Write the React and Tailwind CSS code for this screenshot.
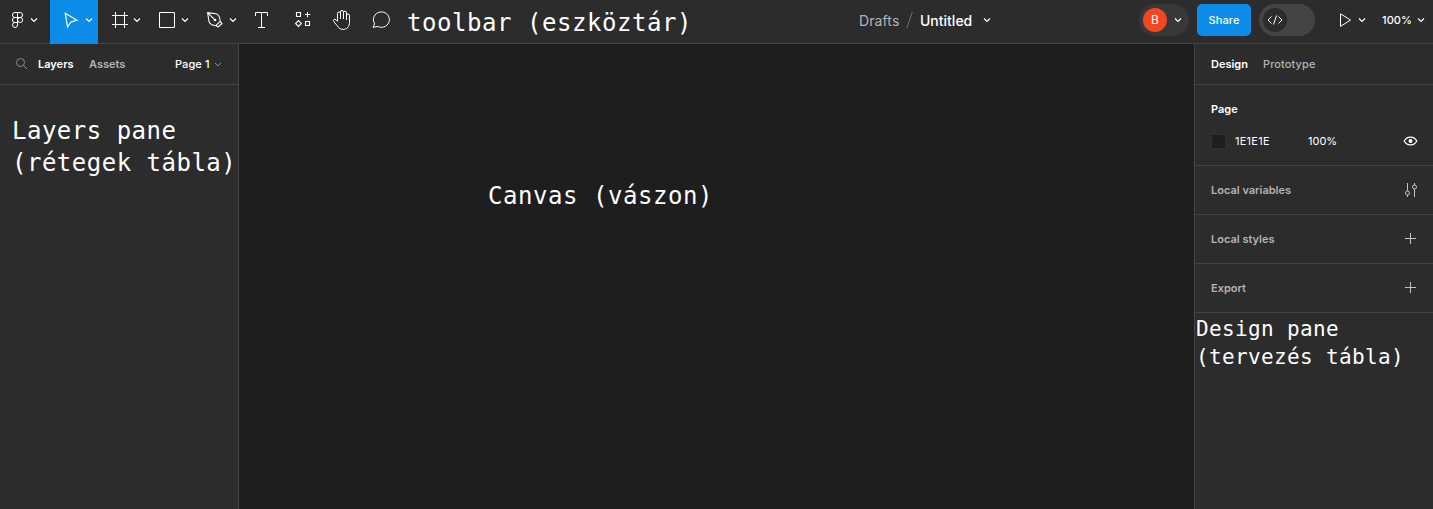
import React from "react";

const Tool = ({ x, w, active, children }) => (
  <button
    className={active ? "h-11 shrink-0 bg-[#0c8ce9] text-white" : "h-11 shrink-0 text-white"}
    style={{ width: w }}
  >
    <svg
      width={w}
      height="44"
      viewBox={`${x} 0 ${w} 44`}
      fill="none"
      stroke="currentColor"
      className="block"
    >
      {children}
    </svg>
  </button>
);

const chev = (x, y = 18.5) => `M${x - 3} ${y}l3 3 3-3`;

const Section = ({ title, children }) => (
  <div className="flex h-[49px] items-center justify-between border-b border-[#444] pr-[15px] pl-4 text-[11px] font-semibold text-[#b3b3b3]">
    <span>{title}</span>
    {children}
  </div>
);

const Plus = () => (
  <svg width="15" height="16" viewBox="0 0 15 16" fill="none" stroke="#c4c4c4">
    <path d="M7.5 2v11M2 7.5h11" />
  </svg>
);

const note = "font-['DejaVu_Sans_Mono',monospace] whitespace-pre text-white";

export default function App() {
  return (
    <div className="flex h-[509px] w-[1433px] flex-col overflow-hidden bg-[#1e1e1e] font-[Inter,sans-serif] text-white">
      <header className="flex h-11 shrink-0 items-start border-b border-[#444] bg-[#2c2c2c]">
        <Tool x={0} w={50}>
          <path d="M17.5 12.5h-2.6a2.5 2.5 0 0 0 0 5h2.6zM17.5 12.5h2.6a2.5 2.5 0 0 1 0 5h-2.6zM17.5 17.5h-2.6a2.5 2.5 0 0 0 0 5h2.6zM17.5 22.5h-2.6a2.5 2.5 0 1 0 2.6 2.5z" />
          <circle cx="20.1" cy="20" r="2.5" />
          <path d={chev(34)} strokeWidth="1.2" />
        </Tool>
        <Tool x={50} w={48} active>
          <path d="M65.3 13.3L77 20.2l-6 1.7-3.5 5z" strokeWidth="1.2" />
          <path d={chev(89)} strokeWidth="1.2" />
        </Tool>
        <Tool x={98} w={48}>
          <path d="M115.5 12v16M124.5 12v16M112 15.5h16M112 24.5h16" />
          <path d={chev(137)} strokeWidth="1.2" />
        </Tool>
        <Tool x={146} w={48}>
          <path d="M159.5 12.5h15v15h-15z" />
          <path d={chev(185)} strokeWidth="1.2" />
        </Tool>
        <Tool x={194} w={47}>
          <path
            d="M207.6 12.6l8.4 1.2c2.6.8 4 3.8 4.2 7.6l-4.4 4.2c-3.6-.2-6-1.6-6.8-4.2zM207.6 12.6l6.6 6.6M215.8 25.6l2.4 1.3 3.8-3.4-1.8-2.1"
            strokeLinejoin="round"
            strokeWidth="1.1"
          />
          <circle cx="215" cy="20" r="1.3" fill="currentColor" stroke="none" />
          <path d={chev(233)} strokeWidth="1.2" />
        </Tool>
        <Tool x={241} w={41}>
          <path d="M255.5 16v-3.5h12V16M261.5 12.5v15M258 27.5h7" />
        </Tool>
        <Tool x={282} w={41}>
          <path
            d="M296.5 12.5h4v4h-4zM305.5 21.5h4v4h-4zM307.5 12v5.2M305 14.5h5.2M298.5 20.6l2.9 2.9-2.9 2.9-2.9-2.9z"
            strokeWidth="1.1"
          />
        </Tool>
        <Tool x={323} w={39}>
          <path d="M337.5 20.5v-7a1.5 1.5 0 0 1 3 0v5.5M340.5 19v-7a1.5 1.5 0 0 1 3 0v7M343.5 19v-6.3a1.5 1.5 0 0 1 3 0V20M346.5 17v-1.5a1.5 1.5 0 0 1 3 0v6.7c0 4.5-2.5 7.2-6.3 7.2-3 0-4.5-1.3-6-3.7l-3.3-4c-1.3-1.7.6-3.2 2-2l1.6 1.6v-2" />
        </Tool>
        <Tool x={362} w={45}>
          <path d="M373 27.3l1.6-3.6a8 7.7 0 1 1 3.2 2.8z" strokeLinejoin="round" />
        </Tool>
        <span className={`${note} w-[452px] pt-2 text-[24px] leading-[30px] tracking-[0.55px]`}>
          toolbar (eszköztár)
        </span>
        <div className="flex h-10 w-[280px] items-center text-[14px]">
          <span className="w-[47px] tracking-[0.1px] text-[#b3b3b3]">Drafts</span>
          <svg width="14" height="20" viewBox="906 10 14 20" stroke="#6f6f6f" fill="none">
            <path d="M912.3 12l-5.5 16" />
          </svg>
          <span className="w-[61px] font-medium">Untitled</span>
          <svg width="12" height="20" viewBox="981 10 12 20" stroke="#fff" fill="none">
            <path d={chev(987)} strokeWidth="1.2" />
          </svg>
        </div>
        <div className="flex h-10 items-center">
          <div className="flex h-8 w-[50px] items-center rounded-full bg-[#383838] pl-1">
            <span className="flex h-6 w-6 items-center justify-center rounded-full bg-[#f24822] text-[12px]">
              B
            </span>
            <svg width="20" height="20" viewBox="1167 10 20 20" stroke="#fff" fill="none">
              <path d={chev(1178)} strokeWidth="1.2" />
            </svg>
          </div>
          <button className="ml-2 h-8 w-[54px] rounded-[5px] bg-[#0c8ce9] text-[11px] font-medium tracking-[0.1px]">
            Share
          </button>
          <div className="ml-2 flex h-8 w-14 items-center rounded-full bg-[#444] pl-1">
            <svg width="24" height="24" viewBox="1263 8 24 24" fill="none" stroke="#fff" className="rounded-full bg-[#2c2c2c]">
              <path d="M1271.5 16.5l-3.5 3.5 3.5 3.5M1278.5 16.5l3.5 3.5-3.5 3.5M1276.5 15.5l-3 9" />
            </svg>
          </div>
          <svg width="67" height="40" viewBox="1315 0 67 40" fill="none" stroke="#fff">
            <path d="M1340.5 13.8v12.6l10-6.3z" />
            <path d={chev(1362)} strokeWidth="1.2" />
          </svg>
          <span className="w-[33px] text-[11px] font-medium tracking-[0.1px]">100%</span>
          <svg width="18" height="20" viewBox="1415 10 18 20" fill="none" stroke="#fff">
            <path d={chev(1421)} strokeWidth="1.2" />
          </svg>
        </div>
      </header>

      <div className="flex min-h-0 flex-1">
        <aside className="w-[239px] shrink-0 border-r border-[#444] bg-[#2c2c2c]">
          <div className="flex h-[41px] items-center border-b border-[#444] text-[11px] font-semibold">
            <svg width="38" height="20" viewBox="0 54 38 20" fill="none" stroke="#8c8c8c">
              <circle cx="20.5" cy="62.5" r="4" />
              <path d="M23.5 65.5l3.6 3.6" />
            </svg>
            <span className="w-[51px]">Layers</span>
            <span className="w-[86px] text-[#b3b3b3]">Assets</span>
            <span className="w-9 font-medium whitespace-nowrap tracking-[0.1px]">Page 1</span>
            <svg width="14" height="20" viewBox="211 54 14 20" fill="none" stroke="#8c8c8c">
              <path d={chev(218, 63)} />
            </svg>
          </div>
          <p className={`${note} pt-[30px] pl-3 text-[24px] leading-8 tracking-[0.5px]`}>
            {"Layers pane\n(rétegek tábla)"}
          </p>
        </aside>

        <main className="w-[955px] shrink-0 bg-[#1e1e1e] pt-[136px] pl-[249px]">
          <p className={`${note} text-[24px] leading-8 tracking-[0.55px]`}>Canvas (vászon)</p>
        </main>

        <aside className="flex-1 border-l border-[#444] bg-[#2c2c2c]">
          <div className="flex h-[41px] items-center gap-[15px] border-b border-[#444] pl-4 text-[11px]">
            <span className="font-semibold">Design</span>
            <span className="font-medium tracking-[0.1px] text-[#b3b3b3]">Prototype</span>
          </div>
          <div className="h-[81px] border-b border-[#444] pr-[15px] pl-4 text-[11px]">
            <div className="flex h-10 items-center pt-2 font-semibold">Page</div>
            <div className="flex h-8 items-center">
              <span className="h-[15px] w-[15px] border border-[#303030] bg-[#1e1e1e]" />
              <span className="w-[73px] pl-[9px] tracking-[0.25px]">1E1E1E</span>
              <span className="flex-1 pl-[9px]">100%</span>
              <svg width="15" height="12" viewBox="0 0 15 12" fill="none" stroke="#fff">
                <path d="M1.2 6C3.8.8 11.2.8 13.8 6 11.2 11.2 3.8 11.2 1.2 6z" strokeWidth="1.2" />
                <circle cx="7.5" cy="6" r="2" fill="#fff" stroke="none" />
              </svg>
            </div>
          </div>
          <Section title="Local variables">
            <svg width="15" height="16" viewBox="0 0 15 16" fill="none" stroke="#c4c4c4">
              <path d="M4.5 1v8M4.5 13v2M11.5 1v2M11.5 7v8" />
              <circle cx="4.5" cy="11" r="2" />
              <circle cx="11.5" cy="5" r="2" />
            </svg>
          </Section>
          <Section title="Local styles">
            <Plus />
          </Section>
          <Section title="Export">
            <Plus />
          </Section>
          <p className={`${note} pt-[2px] pl-px text-[21px] leading-7 tracking-[0.35px]`}>
            {"Design pane\n(tervezés tábla)"}
          </p>
        </aside>
      </div>
    </div>
  );
}
